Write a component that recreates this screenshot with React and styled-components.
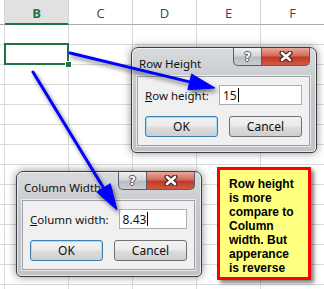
import React from 'react';
import styled, { createGlobalStyle, css } from 'styled-components';

const GlobalStyle = createGlobalStyle`
  html, body {
    margin: 0;
    padding: 0;
    background: #fff;
    overflow: hidden;
  }
`;

const Page = styled.div`
  position: relative;
  width: 324px;
  height: 289px;
  overflow: hidden;
  font-family: 'Noto Sans', 'Open Sans', sans-serif;
`;

const Sheet = styled.div`
  display: grid;
  grid-template-columns: 5px repeat(5, 64px);
  grid-template-rows: 25px;
  grid-auto-rows: 20px;
`;

const HeaderCell = styled.div`
  box-sizing: border-box;
  display: flex;
  align-items: center;
  justify-content: center;
  padding-top: 2px;
  border-right: 1px solid #d4d4d4;
  border-bottom: 1px solid #ababab;
  font-family: 'Open Sans', 'Noto Sans', sans-serif;
  font-size: 13px;
  color: #444;
  ${(p) =>
    p.$active &&
    css`
      background: #e1e1e1;
      border-bottom: 2px solid #217346;
      color: #217346;
      font-weight: 700;
    `}
`;

const Cell = styled.div`
  position: relative;
  box-sizing: border-box;
  border-right: 1px solid #dadada;
  border-bottom: 1px solid #dadada;
  ${(p) =>
    p.$selected &&
    css`
      &::after {
        content: '';
        position: absolute;
        top: -2px;
        left: -1px;
        right: -1px;
        bottom: -1px;
        border: 2px solid #217346;
        z-index: 2;
      }
      &::before {
        content: '';
        position: absolute;
        right: -4px;
        bottom: -4px;
        width: 5px;
        height: 5px;
        background: #217346;
        border: 1px solid #fff;
        z-index: 3;
      }
    `}
`;

const Window = styled.div`
  position: absolute;
  left: ${(p) => p.$x}px;
  top: ${(p) => p.$y}px;
  width: 186px;
  height: 106px;
  box-sizing: border-box;
  display: flex;
  flex-direction: column;
  padding: 0 6px 6px 5px;
  border: 1px solid #3d3f42;
  border-radius: 7px 7px 5px 5px;
  background: linear-gradient(#d8dadd, #c4c7cb 40%, #c0c3c7);
  box-shadow: 0 0 9px rgba(0, 0, 0, 0.45), inset 0 0 0 1px rgba(255, 255, 255, 0.55);
  font-size: 11px;
  z-index: 5;
`;

const TitleBar = styled.div`
  display: flex;
  justify-content: space-between;
  align-items: flex-start;
  height: 29px;
`;

const Title = styled.span`
  margin: 8px 0 0 2px;
  font-size: 11.5px;
  color: #111;
`;

const Controls = styled.div`
  display: flex;
`;

const CtrlButton = styled.div`
  box-sizing: border-box;
  height: 18px;
  display: flex;
  align-items: center;
  justify-content: center;
  border: 1px solid #5a5d62;
  border-top: none;
  ${(p) =>
    p.$close
      ? css`
          width: 48px;
          border-left: none;
          border-radius: 0 0 5px 0;
          background: linear-gradient(#e9a99c, #d46b5b 45%, #c13a28 55%, #d05a45);
        `
      : css`
          width: 29px;
          border-radius: 0 0 0 5px;
          background: linear-gradient(#eef0f2, #d3d6da 45%, #b9bdc2 55%, #c9ccd0);
        `}
`;

const Help = styled.span`
  font-family: 'DejaVu Sans', sans-serif;
  font-weight: 700;
  font-size: 12px;
  color: #fff;
  text-shadow: 1px 0 0 #555, -1px 0 0 #555, 0 1px 0 #555, 0 -1px 0 #555;
`;

const Panel = styled.div`
  flex: 1;
  display: flex;
  flex-direction: column;
  gap: 11px;
  padding: 8px 7px 8px 7px;
  border: 1px solid #9ea1a5;
  background: #f0f0f0;
  box-shadow: 0 0 0 1px rgba(255, 255, 255, 0.6);
`;

const Field = styled.div`
  display: flex;
  align-items: center;
  gap: 10px;
  height: 20px;
`;

const Label = styled.span`
  font-size: 11.5px;
  color: #111;
  white-space: nowrap;
`;

const TextBox = styled.div`
  flex: 1;
  height: 20px;
  box-sizing: border-box;
  display: flex;
  align-items: center;
  padding: 0 3px;
  border: 1px solid #abadb3;
  background: #fff;
  font-size: 12px;
  color: #111;
`;

const Caret = styled.span`
  display: inline-block;
  width: 1px;
  height: 14px;
  margin-left: 1px;
  background: #000;
`;

const Buttons = styled.div`
  display: grid;
  grid-template-columns: 73px 73px;
  justify-content: space-between;
`;

const Button = styled.div`
  box-sizing: border-box;
  height: 21px;
  display: flex;
  align-items: center;
  justify-content: center;
  border: 1px solid #707070;
  border-radius: 3px;
  background: linear-gradient(#f2f2f2, #ebebeb 48%, #dddddd 52%, #cfcfcf);
  font-size: 12px;
  color: #111;
  ${(p) =>
    p.$primary &&
    css`
      border-color: #3c7fb1;
      box-shadow: inset 0 0 0 1px #a6dcf6;
    `}
`;

const Note = styled.div`
  position: absolute;
  left: 217px;
  top: 167px;
  width: 94px;
  height: 113px;
  box-sizing: border-box;
  padding: 7px 4px 0 9px;
  border: 3px solid #ff0000;
  background: #ffff80;
  box-shadow: 3px 3px 4px rgba(0, 0, 0, 0.5);
  font-family: 'Liberation Sans', Arial, sans-serif;
  font-weight: 700;
  font-size: 12px;
  line-height: 14px;
  color: #000;
  z-index: 4;
`;

const NoteLine = styled.span`
  display: block;
  white-space: nowrap;
`;

const Overlay = styled.svg`
  position: absolute;
  left: 0;
  top: 0;
  z-index: 10;
  pointer-events: none;
  filter: drop-shadow(2px 3px 2px rgba(0, 0, 0, 0.5));
`;

const cols = ['', 'B', 'C', 'D', 'E', 'F'];

const Arrow = ({ from, to, len = 26, half = 8 }) => {
  const dx = to[0] - from[0];
  const dy = to[1] - from[1];
  const d = Math.hypot(dx, dy);
  const ux = dx / d;
  const uy = dy / d;
  const bx = to[0] - ux * len;
  const by = to[1] - uy * len;
  const pts = [
    [to[0], to[1]],
    [bx - uy * half, by + ux * half],
    [bx + uy * half, by - ux * half],
  ]
    .map((p) => p.join(','))
    .join(' ');
  return (
    <g fill="#0000ff" stroke="#0000ff">
      <line x1={from[0]} y1={from[1]} x2={bx + ux * 2} y2={by + uy * 2} strokeWidth="3" strokeLinecap="round" />
      <polygon points={pts} strokeWidth="1" strokeLinejoin="round" />
    </g>
  );
};

const CloseIcon = () => (
  <svg width="14" height="11" viewBox="0 0 14 11">
    <path d="M3 2 L11 9 M11 2 L3 9" stroke="#4a2a26" strokeWidth="5" strokeLinecap="round" />
    <path d="M3 2 L11 9 M11 2 L3 9" stroke="#fff" strokeWidth="2.6" strokeLinecap="round" />
  </svg>
);

const Dialog = ({ x, y, title, hotkey, rest, value }) => (
  <Window $x={x} $y={y}>
    <TitleBar>
      <Title>{title}</Title>
      <Controls>
        <CtrlButton>
          <Help>?</Help>
        </CtrlButton>
        <CtrlButton $close>
          <CloseIcon />
        </CtrlButton>
      </Controls>
    </TitleBar>
    <Panel>
      <Field>
        <Label>
          <u>{hotkey}</u>
          {rest}
        </Label>
        <TextBox>
          {value}
          <Caret />
        </TextBox>
      </Field>
      <Buttons>
        <Button $primary>OK</Button>
        <Button>Cancel</Button>
      </Buttons>
    </Panel>
  </Window>
);

const noteLines = ['Row height', 'is more', 'compare to', 'Column', 'width. But', 'apperance', 'is reverse'];

export default function App() {
  return (
    <Page>
      <GlobalStyle />
      <Sheet>
        {cols.map((c, i) => (
          <HeaderCell key={'h' + i} $active={c === 'B'}>
            {c}
          </HeaderCell>
        ))}
        {Array.from({ length: 14 }).map((_, r) =>
          cols.map((c, i) => <Cell key={r + '-' + i} $selected={r === 1 && c === 'B'} />)
        )}
      </Sheet>

      <Dialog x={131} y={47} title="Row Height" hotkey="R" rest="ow height:" value="15" />
      <Dialog x={16} y={171} title="Column Width" hotkey="C" rest="olumn width:" value="8.43" />

      <Note>
        {noteLines.map((l) => (
          <NoteLine key={l}>{l}</NoteLine>
        ))}
      </Note>

      <Overlay width="324" height="289" viewBox="0 0 324 289">
        <Arrow from={[70, 53]} to={[215, 88]} />
        <Arrow from={[33, 72]} to={[117, 210]} />
      </Overlay>
    </Page>
  );
}
